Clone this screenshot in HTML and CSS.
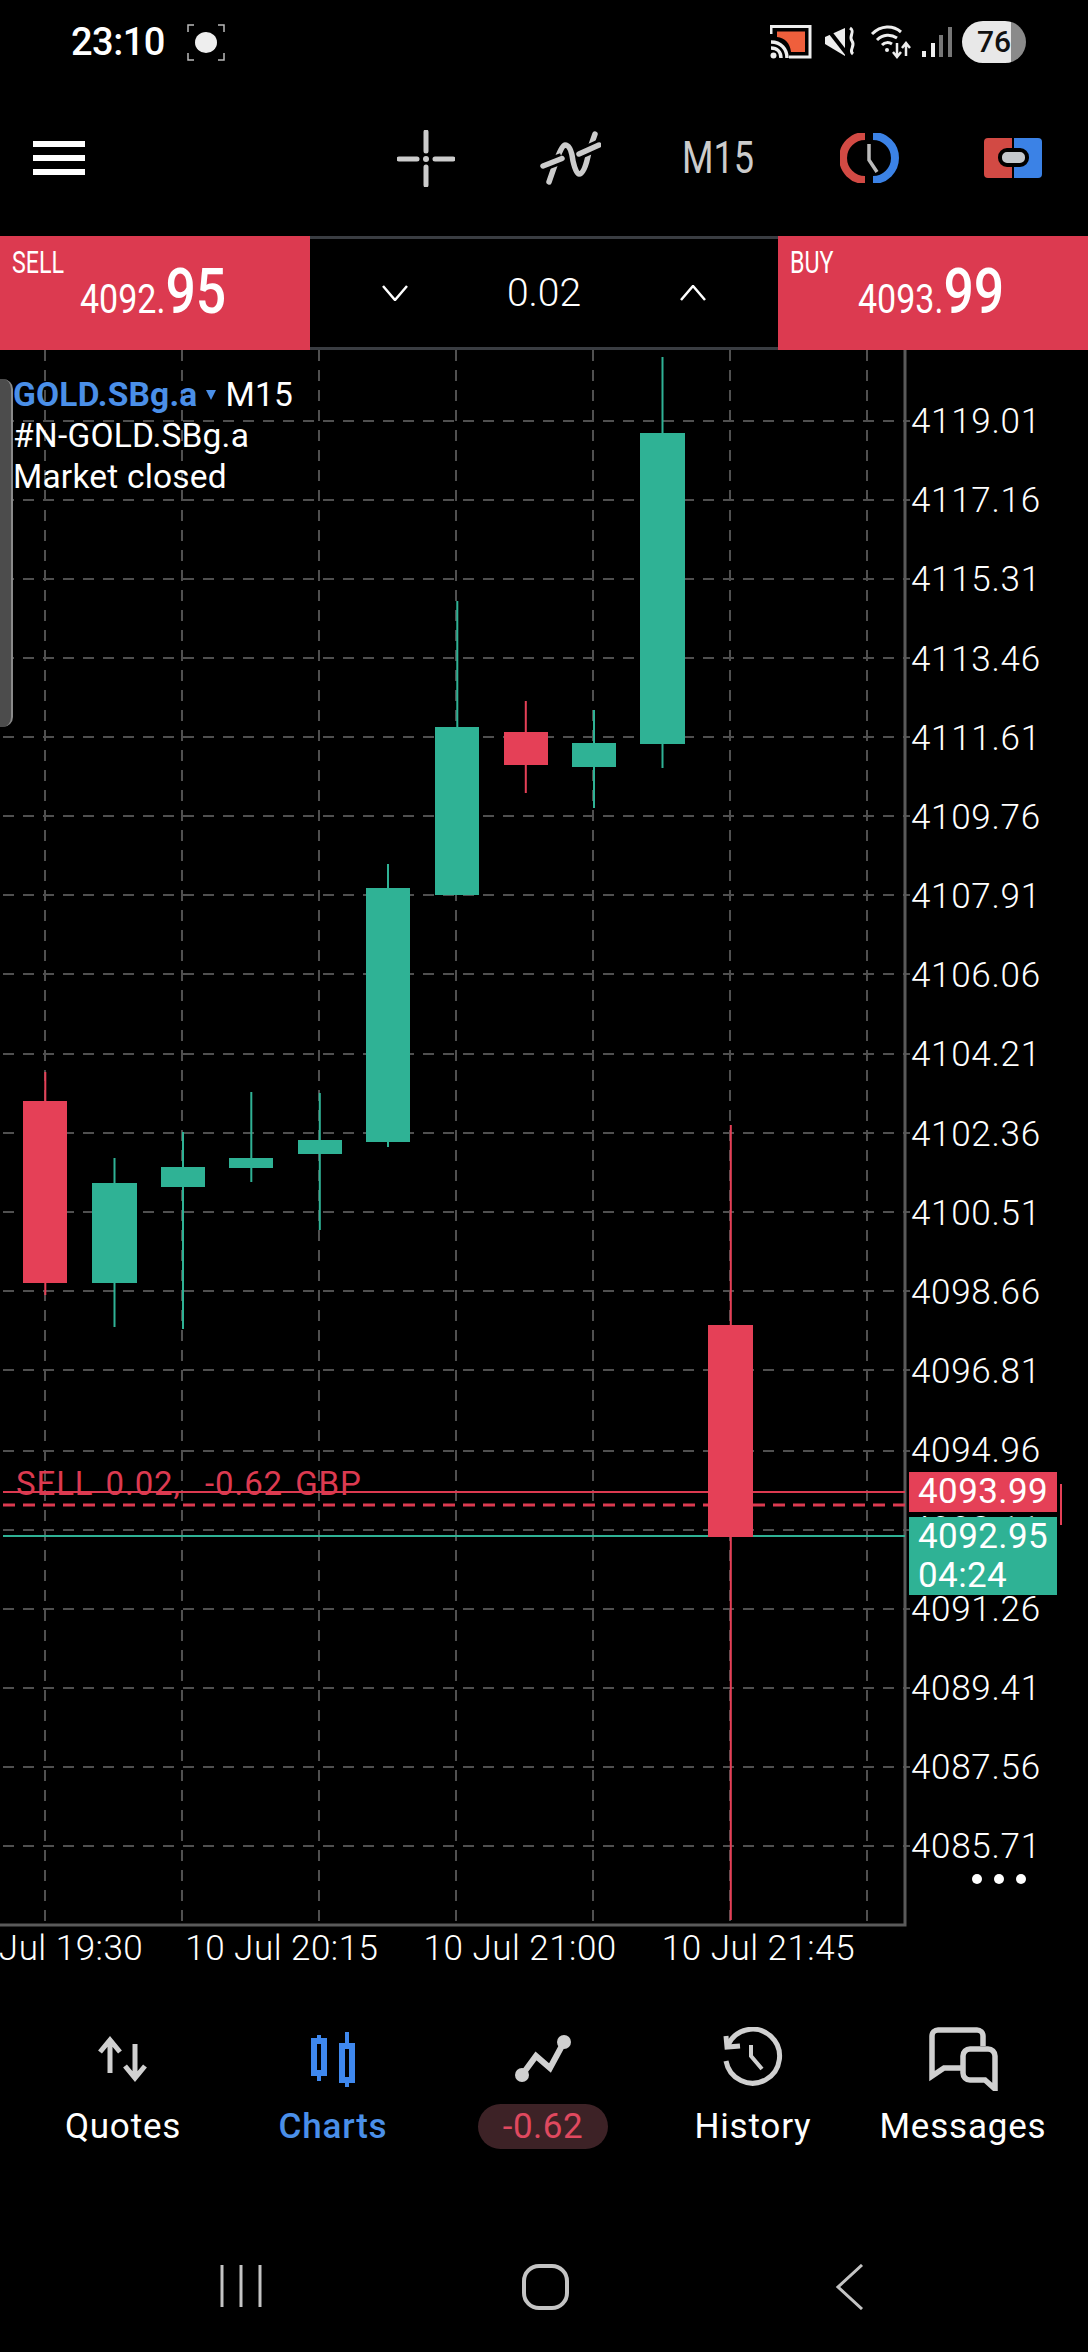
FILE: index.html
```html
<!DOCTYPE html>
<html lang="en">
<head>
  <meta charset="UTF-8" />
  <meta name="viewport" content="width=device-width, initial-scale=1" />
  <title>GOLD.SBg.a M15</title>
  <link rel="stylesheet" href="styles.css">
</head>
<body>
  <div class="screen">

    <div class="statusbar">
      <div class="status-left">
        <span class="clock">23:10</span>
        <svg class="focus-icon" width="38" height="37" viewBox="0 0 38 37">
          <ellipse cx="19" cy="18.500" rx="11" ry="10.500" fill="#eee"/>
          <path d="M7 1H1V8M31 1H37V8M7 36H1V29M31 36H37V29" fill="none" stroke="#bbb" stroke-width="1.500"/>
        </svg>
      </div>
      <div class="status-right">
        <svg width="182" height="36" viewBox="770 26 182 36">
          <path d="M771 36V28.500H810V59H789" fill="none" stroke="#eee" stroke-width="3"/>
          <path d="M777 33.500H805V54H791C790 45 785 40 777 39Z" fill="#ef5f3c"/>
          <path d="M771 44C781 44 787 51 787 60M771 50C777 50 781 54 781 60" fill="none" stroke="#eee" stroke-width="3.500"/>
          <circle cx="773.500" cy="57.500" r="3" fill="#eee"/>
          <path d="M825 39L845 30V58L825 46Z" fill="#eee"/>
          <path d="M826 29L847 56" stroke="#000" stroke-width="4"/>
          <path d="M850 30C856 34 848 38 852 43C856 48 848 52 853 56" fill="none" stroke="#eee" stroke-width="3"/>
          <path d="M872 36C881 27 893 27 901 34M877 42C883 36 891 36 897 40M882 47C885 44 889 44 892 46" fill="none" stroke="#eee" stroke-width="3"/>
          <circle cx="887" cy="52" r="2" fill="#eee"/>
          <path d="M897 45V58M893 54L897 59L901 54M906 58V46M902 50L906 45L910 50" fill="none" stroke="#eee" stroke-width="2.500"/>
          <path d="M924 59V53M933 59V45" stroke="#eee" stroke-width="4"/>
          <path d="M941 59V37M950 59V29" stroke="#777" stroke-width="4"/>
        </svg>
        <span class="battery">76</span>
      </div>
    </div>

    <div class="toolbar">
      <div class="hamburger"><span></span><span></span><span></span></div>
      <div class="tools">
        <svg width="58" height="57" viewBox="397 128 58 57">
          <path d="M426 130V149M426 165V183M399 157H417M435 157H453" fill="none" stroke="#ccc" stroke-width="5" stroke-linecap="round"/>
          <circle cx="426" cy="157" r="3" fill="#ccc"/>
        </svg>
        <svg width="62" height="54" viewBox="540 130 62 54">
          <path d="M550 181L558 158Q563 144 566 144Q572 144 574 160Q577 173 580 173Q586 173 590 150L596 133" fill="none" stroke="#ccc" stroke-width="5.500" stroke-linecap="round"/>
          <path d="M543 165L563 157.500M580 153L600 144" stroke="#000" stroke-width="11"/>
          <path d="M544 165L563 157.500M580 153L600 144" stroke="#ccc" stroke-width="5.500" stroke-linecap="round"/>
        </svg>
        <span class="tool-period">M15</span>
        <svg width="60" height="50" viewBox="837 131 60 50">
          <path d="M862 134A22 22 0 0 0 862 178" fill="none" stroke="#d24a44" stroke-width="8"/>
          <path d="M870 134A22 22 0 0 1 870 178" fill="none" stroke="#3b82e6" stroke-width="8"/>
          <path d="M866 142V158L874 170" fill="none" stroke="#bbb" stroke-width="3.500"/>
        </svg>
        <svg width="58" height="40" viewBox="984 137 58 40">
          <path d="M988 137H1012V177H988A4 4 0 0 1 984 173V141A4 4 0 0 1 988 137Z" fill="#d24a44"/>
          <path d="M1014 137H1038A4 4 0 0 1 1042 141V173A4 4 0 0 1 1038 177H1014Z" fill="#3b82e6"/>
          <rect x="1000" y="149" width="27" height="15" rx="7" fill="#c4c8cc" stroke="#000" stroke-width="4"/>
        </svg>
      </div>
    </div>

    <div class="trade">
      <div class="quote">
        <span class="quote-label">SELL</span>
        <span class="quote-price">4092.<b>95</b></span>
      </div>
      <div class="volume">
        <svg width="26" height="16" viewBox="0 0 26 16"><path d="M1 1L13 15L25 1" fill="none" stroke="#fff" stroke-width="2.500"/></svg>
        <span class="volume-value">0.02</span>
        <svg width="26" height="16" viewBox="0 0 26 16"><path d="M1 15L13 1L25 15" fill="none" stroke="#fff" stroke-width="2.500"/></svg>
      </div>
      <div class="quote">
        <span class="quote-label">BUY</span>
        <span class="quote-price">4093.<b>99</b></span>
      </div>
    </div>

    <div class="chart">
      <div class="plot">
        <svg class="plot-svg" width="910" height="1577" viewBox="0 350 910 1577">
          <g class="grid">
            <path d="M45 350V1925M182 350V1925M319 350V1925M456 350V1925M593 350V1925M730 350V1925M867 350V1925"/>
            <path d="M3 421H910M3 500H910M3 579H910M3 658H910M3 737H910M3 816H910M3 895H910M3 974H910M3 1054H910M3 1133H910M3 1212H910M3 1291H910M3 1370H910M3 1451H910M3 1530H910M3 1609H910M3 1688H910M3 1767H910M3 1846H910"/>
          </g>
          <path class="frame" d="M905 350V1925H0"/>

          <g class="bull">
            <path class="wick" d="M114.500 1158V1327M183 1132V1329M251.300 1092V1182M319.800 1093V1230M388 864V1147M457.300 601V895M594 710V808M662.500 357V768"/>
            <rect x="92" y="1183" width="45" height="100"/>
            <rect x="161" y="1167" width="44" height="20"/>
            <rect x="229" y="1158" width="44" height="10"/>
            <rect x="298" y="1140" width="44" height="14"/>
            <rect x="366" y="888" width="44" height="254"/>
            <rect x="435" y="727" width="44" height="168"/>
            <rect x="572" y="743" width="44" height="24"/>
            <rect x="640" y="433" width="45" height="311"/>
          </g>
          <g class="bear">
            <path class="wick" d="M45.300 1072V1295M525.800 701V793M730.800 1125V1920"/>
            <rect x="23" y="1101" width="44" height="182"/>
            <rect x="504" y="732" width="44" height="33"/>
            <rect x="708" y="1325" width="45" height="212"/>
          </g>

          <path class="line-sell" d="M3 1492H708M753 1492H905"/>
          <path class="line-sell dashed" d="M3 1505H708M753 1505H905"/>
          <path class="line-bid" d="M3 1536H708M753 1536H905"/>
        </svg>

        <div class="side-handle"></div>
        <div class="chart-info">
          <div><span class="symbol">GOLD.SBg.a</span><span class="symbol-arrow"></span>M15</div>
          <div>#N-GOLD.SBg.a</div>
          <div>Market closed</div>
        </div>
        <div class="position-label">SELL 0.02,  -0.62 GBP</div>
      </div>

      <div class="price-axis">
        <span>4119.01</span>
        <span>4117.16</span>
        <span>4115.31</span>
        <span>4113.46</span>
        <span>4111.61</span>
        <span>4109.76</span>
        <span>4107.91</span>
        <span>4106.06</span>
        <span>4104.21</span>
        <span>4102.36</span>
        <span>4100.51</span>
        <span>4098.66</span>
        <span>4096.81</span>
        <span>4094.96</span>
        <span>4093.11</span>
        <span>4091.26</span>
        <span>4089.41</span>
        <span>4087.56</span>
        <span>4085.71</span>
      </div>

      <div class="ask-tick"></div>
      <div class="tag tag-ask">4093.99</div>
      <div class="tag tag-bid">4092.95<br>04:24</div>
      <div class="more-dots"><i></i><i></i><i></i></div>
    </div>

    <div class="time-axis">
      <span>10 Jul 19:30</span>
      <span>10 Jul 20:15</span>
      <span>10 Jul 21:00</span>
      <span>10 Jul 21:45</span>
    </div>

    <div class="tabs">
      <div class="tab">
        <svg class="tab-icon" width="60" height="64" viewBox="94 2027 60 64">
          <path d="M111 2073V2041M101 2052L111 2040L121 2052M136 2044V2077M126 2066L136 2078L146 2066" fill="none" stroke="#d0d0d0" stroke-width="5"/>
        </svg>
        <span class="tab-label">Quotes</span>
      </div>
      <div class="tab active">
        <svg class="tab-icon" width="60" height="64" viewBox="304 2027 60 64">
          <path d="M320 2035V2081M348 2032V2087" stroke="#3f88ee" stroke-width="4"/>
          <rect x="315" y="2041" width="10" height="32" fill="#000" stroke="#3f88ee" stroke-width="6"/>
          <rect x="343" y="2046" width="10" height="34" fill="#000" stroke="#3f88ee" stroke-width="6"/>
        </svg>
        <span class="tab-label">Charts</span>
      </div>
      <div class="tab">
        <svg class="tab-icon" width="64" height="64" viewBox="512 2027 64 64">
          <path d="M523 2075L537 2056L551 2068L565 2042" fill="none" stroke="#d0d0d0" stroke-width="6"/>
          <circle cx="523" cy="2075" r="7" fill="#d0d0d0"/>
          <circle cx="565" cy="2042" r="7" fill="#d0d0d0"/>
        </svg>
        <span class="tab-pill">-0.62</span>
      </div>
      <div class="tab">
        <svg class="tab-icon" width="64" height="64" viewBox="722 2027 64 64">
          <path d="M729 2045A27 27 0 1 1 727 2061" fill="none" stroke="#d0d0d0" stroke-width="5"/>
          <path d="M727 2036L728 2047L741 2046" fill="none" stroke="#d0d0d0" stroke-width="5"/>
          <path d="M752 2045V2056L763 2069" fill="none" stroke="#d0d0d0" stroke-width="4"/>
        </svg>
        <span class="tab-label">History</span>
      </div>
      <div class="tab">
        <svg class="tab-icon" width="74" height="64" viewBox="927 2027 74 64">
          <path d="M984 2046V2036A6 6 0 0 0 978 2030H939A6 6 0 0 0 933 2036V2076L945 2068H963" fill="none" stroke="#d0d0d0" stroke-width="5.500"/>
          <path d="M971 2049H989A7 7 0 0 1 996 2056V2089L986 2080H971A7 7 0 0 1 964 2073V2056A7 7 0 0 1 971 2049Z" fill="none" stroke="#d0d0d0" stroke-width="5.500"/>
        </svg>
        <span class="tab-label">Messages</span>
      </div>
    </div>

    <div class="navbar">
      <svg width="44" height="44" viewBox="0 0 44 44"><path d="M3 1V43M22 1V43M41 1V43" stroke="#c4c4c4" stroke-width="3"/></svg>
      <svg width="48" height="46" viewBox="0 0 48 46"><rect x="2" y="2" width="43" height="42" rx="15" fill="none" stroke="#c4c4c4" stroke-width="4"/></svg>
      <svg width="30" height="46" viewBox="0 0 30 46"><path d="M27 1L3 23L27 45" fill="none" stroke="#c4c4c4" stroke-width="3"/></svg>
    </div>

  </div>
</body>
</html>
```

FILE: styles.css
```css
* { box-sizing: border-box; }

body {
  margin: 0;
  background: #000;
  color: #fff;
  font-family: Roboto, "Liberation Sans", sans-serif;
}

.screen {
  width: 1088px;
  height: 2352px;
  overflow: hidden;
  display: flex;
  flex-direction: column;
}

/* status bar */
.statusbar {
  height: 80px;
  padding: 4px 62px 0 71px;
  display: flex;
  align-items: center;
  justify-content: space-between;
}

.status-left {
  display: flex;
  align-items: center;
  gap: 22px;
}

.clock {
  font-size: 38px;
  font-weight: 500;
  letter-spacing: -0.5px;
}

.status-right {
  display: flex;
  align-items: center;
  gap: 10px;
}

.battery {
  width: 64px;
  height: 42px;
  border-radius: 21px;
  background: linear-gradient(to right, #e8e8e8 76%, #8a8a8a 76%);
  color: #111;
  font-size: 30px;
  font-weight: 500;
  line-height: 42px;
  text-align: center;
}

/* toolbar */
.toolbar {
  height: 156px;
  padding-left: 33px;
  padding-right: 46px;
  display: flex;
  align-items: center;
  justify-content: space-between;
}

.hamburger {
  width: 52px;
  display: flex;
  flex-direction: column;
  gap: 8px;
}

.hamburger span {
  height: 6px;
  background: #fff;
}

.tools {
  display: flex;
  align-items: center;
  gap: 84px;
}

.tool-period {
  width: 71px;
  margin-left: -3px;
  margin-right: 3px;
  color: #ccc;
  font-size: 44px;
  line-height: 44px;
  transform: scaleX(0.82);
  transform-origin: left;
}

/* sell / buy */
.trade {
  height: 114px;
  display: flex;
}

.quote {
  width: 310px;
  padding: 12px 0 0 12px;
  background: #dc3a50;
  display: flex;
  flex-direction: column;
}

.quote-label {
  font-size: 31px;
  line-height: 30px;
  transform: scaleX(0.75);
  transform-origin: left;
}

.quote-price {
  margin-top: -16px;
  margin-left: 68px;
  font-size: 40px;
  line-height: 60px;
  white-space: nowrap;
  transform: scaleX(0.85);
  transform-origin: left;
}

.quote-price b {
  font-size: 63px;
  font-weight: 500;
}

.volume {
  flex: 1;
  border-top: 3px solid #3a3d42;
  border-bottom: 3px solid #3a3d42;
  display: flex;
  align-items: center;
  justify-content: center;
  gap: 99px;
}

.volume-value {
  font-size: 39px;
  font-weight: 300;
}

/* chart */
.chart {
  height: 1577px;
  position: relative;
  display: flex;
}

.plot {
  width: 910px;
  height: 1577px;
  position: relative;
}

.plot-svg { display: block; }

.grid path {
  fill: none;
  stroke: #505050;
  stroke-width: 2;
  stroke-dasharray: 11 9;
}

.frame {
  fill: none;
  stroke: #5a5a5a;
  stroke-width: 3;
}

.bull rect { fill: #2fb295; }
.bear rect { fill: #e54057; }

.wick {
  fill: none;
  stroke-width: 2;
}

.bull .wick { stroke: #2fb295; }
.bear .wick { stroke: #e54057; }

.line-sell {
  fill: none;
  stroke: #dc3a50;
  stroke-width: 2;
}

.line-sell.dashed {
  stroke-width: 3;
  stroke-dasharray: 12 8;
}

.line-bid {
  fill: none;
  stroke: #2fb295;
  stroke-width: 2;
}

.side-handle {
  position: absolute;
  left: 0;
  top: 29px;
  width: 13px;
  height: 348px;
  background: #4c4c4c;
  border-right: 2px solid #8a8a8a;
  border-radius: 0 10px 10px 0;
}

.chart-info {
  position: absolute;
  left: 13px;
  top: 24px;
  font-size: 33.500px;
  letter-spacing: 0.2px;
  line-height: 41px;
}

.symbol {
  color: #4a8fe8;
  font-weight: 700;
}

.symbol-arrow {
  display: inline-block;
  margin: 0 9px;
  border-left: 5px solid transparent;
  border-right: 5px solid transparent;
  border-top: 10px solid #4a8fe8;
  vertical-align: 6px;
}

.position-label {
  position: absolute;
  left: 16px;
  top: 1116px;
  color: #dc3a50;
  font-size: 33px;
  letter-spacing: 0.9px;
  word-spacing: 3px;
  line-height: 36px;
  white-space: pre;
}

.price-axis {
  padding: 32px 0 0 1px;
  display: flex;
  flex-direction: column;
  font-size: 35px;
  font-weight: 300;
  letter-spacing: 0.7px;
}

.price-axis span {
  height: 79.18px;
  line-height: 79.18px;
}

.tag {
  position: absolute;
  left: 909px;
  width: 148px;
  padding-left: 9px;
  font-size: 35px;
  letter-spacing: 0.4px;
}

.tag-ask {
  top: 1122px;
  height: 40px;
  line-height: 40px;
  background: #e54057;
}

.tag-bid {
  top: 1167px;
  height: 78px;
  line-height: 39px;
  background: #2fb295;
}

.ask-tick {
  position: absolute;
  left: 1057px;
  top: 1134px;
  width: 5px;
  height: 41px;
  border-right: 2px solid #e54057;
}

.more-dots {
  position: absolute;
  left: 972px;
  top: 1524px;
  display: flex;
  gap: 12px;
}

.more-dots i {
  width: 10px;
  height: 10px;
  border-radius: 50%;
  background: #fff;
}

/* time axis */
.time-axis {
  height: 48px;
  margin-left: -50px;
  display: flex;
  gap: 45px;
  font-size: 35px;
  font-weight: 300;
  letter-spacing: 0.5px;
  line-height: 44px;
  white-space: nowrap;
}

.time-axis span:first-child { margin-right: -3px; }

/* bottom tabs */
.tabs {
  height: 215px;
  padding: 52px 0 0 18px;
  display: grid;
  grid-template-columns: repeat(5, 210px);
}

.tab {
  display: flex;
  flex-direction: column;
  align-items: center;
}

.tab-icon {
  display: block;
  margin-bottom: 13px;
}

.tab-label {
  font-size: 35px;
  letter-spacing: 0.8px;
  line-height: 45px;
}

.tab.active .tab-label {
  color: #4a8fe8;
  font-weight: 500;
}

.tab-pill {
  width: 130px;
  height: 45px;
  border-radius: 23px;
  background: #3d2226;
  color: #e0495f;
  font-size: 35px;
  letter-spacing: 0.5px;
  line-height: 45px;
  text-align: center;
}

/* android nav */
.navbar {
  flex: 1;
  padding: 74px 0 0 89px;
  display: grid;
  grid-template-columns: repeat(3, 304.5px);
  justify-items: center;
  align-items: start;
}
```
